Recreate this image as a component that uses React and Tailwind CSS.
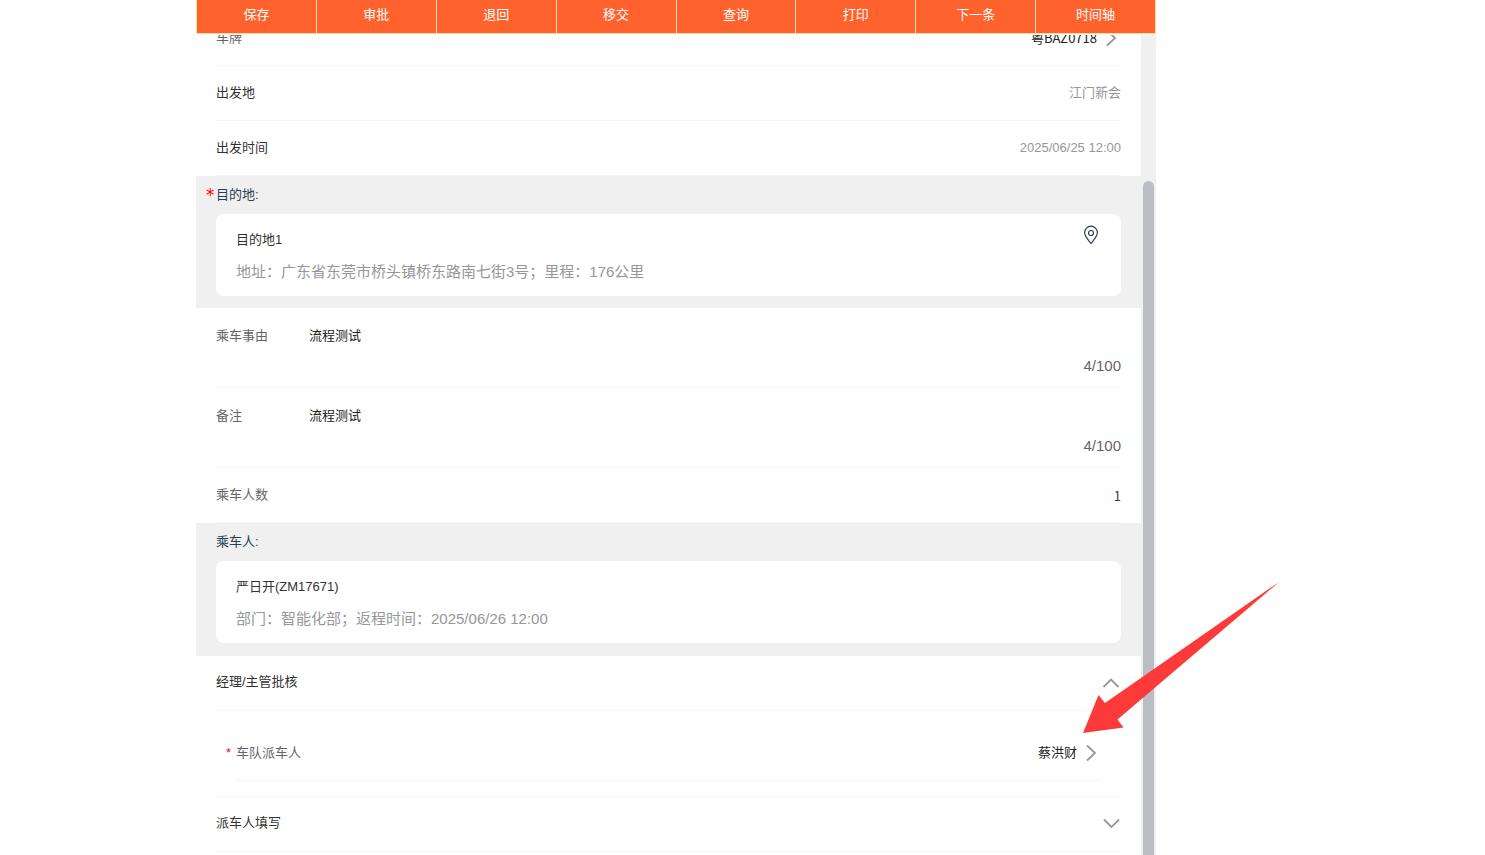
import React, { useState } from "react";

const actions = ["保存", "审批", "退回", "移交", "查询", "打印", "下一条", "时间轴"];

const chevronPaths = {
  right: "M6 2.5L14 10L6 17.500",
  up: "M2.500 15L10 7.500L17.500 15",
  down: "M3 6.500L10.500 14L18 6.500",
};

const Chevron = ({ direction }) => (
  <svg viewBox="0 0 20 20" className="h-5 w-5 shrink-0" fill="none" stroke="#969799" strokeWidth="1.8" aria-hidden="true">
    <path d={chevronPaths[direction]} />
  </svg>
);

const PinIcon = () => (
  <svg viewBox="0 0 20 20" className="h-5 w-5" fill="none" stroke="#2c3e50" strokeWidth="1.2" aria-hidden="true">
    <path d="M10 18.5C8 15.8 3.6 11.6 3.6 7.6A6.4 6.4 0 0 1 16.4 7.6C16.4 11.6 12 15.8 10 18.5Z" />
    <circle cx="10" cy="8" r="2.5" />
  </svg>
);

const Row = ({ children }) => (
  <div className="mx-5 flex h-[55px] items-center justify-between border-b border-[#f5f6f7]">{children}</div>
);

const TextRow = ({ id, label, value, onChange }) => (
  <div className="mx-5 border-b border-[#f5f6f7] pb-[9px]">
    <div className="flex items-start pt-[18px]">
      <label htmlFor={id} className="w-[93px] shrink-0 text-[#646566]">{label}</label>
      <textarea
        id={id}
        rows={1}
        maxLength={100}
        value={value}
        onChange={(e) => onChange(e.target.value)}
        className="block h-7 flex-1 resize-none text-[#222] outline-none"
      />
    </div>
    <p className="text-right text-[15px] leading-6 text-[#646566]">{value.length}/100</p>
  </div>
);

const CardSection = ({ title, required, heading, detail, action }) => (
  <section className="bg-[#f0f0f0] px-5 pb-3">
    <h2 className="-ml-[10px] flex h-[38px] items-center text-[#2c3e50]">
      <span className="w-[10px] font-['DejaVu_Sans',sans-serif] text-[17px] text-[#f00]">{required && "*"}</span>
      {title}
    </h2>
    <div className="flex h-[82px] items-start justify-between rounded-lg bg-white px-5 pt-[11px]">
      <div>
        <h3 className="leading-[30px] text-[#323233]">{heading}</h3>
        <p className="text-[15px] leading-[34px] text-[#969799]">{detail}</p>
      </div>
      {action}
    </div>
  </section>
);

const CollapseHeader = ({ title, open, onClick }) => (
  <button
    type="button"
    aria-expanded={open}
    onClick={onClick}
    className="flex h-[54px] w-full cursor-pointer items-center justify-between pb-0.5 text-[#323233]"
  >
    {title}
    <Chevron direction={open ? "up" : "down"} />
  </button>
);

const App = () => {
  const [reason, setReason] = useState("流程测试");
  const [remark, setRemark] = useState("流程测试");
  const [count, setCount] = useState("1");
  const [approvalOpen, setApprovalOpen] = useState(true);
  const [dispatchOpen, setDispatchOpen] = useState(false);

  return (
    <div className="h-screen overflow-hidden bg-white pl-[196px] pr-[329px] font-['Liberation_Sans','Noto_Sans_CJK_SC',sans-serif] text-[13px] leading-5">
      <div className="relative h-full">
        <nav className="absolute inset-x-0 top-0 z-10 bg-white pb-px">
          <div className="grid grid-cols-8 border-l border-[#ffd9a8]">
            {actions.map((name) => (
              <button
                key={name}
                type="button"
                className="h-[34px] cursor-pointer rounded-br-xs border-r border-b border-[#ffd9a8] bg-[#ff622d] pb-1 text-white"
              >
                {name}
              </button>
            ))}
          </div>
        </nav>

        <div className="flex h-full">
          <main className="min-w-0 flex-1 overflow-hidden pt-[11px]">
            <Row>
              <span className="text-[#646566]">车牌</span>
              <button type="button" className="flex cursor-pointer items-center gap-1 font-['Noto_Sans_CJK_SC',sans-serif] text-[#222]">
                粤BAZ0718
                <Chevron direction="right" />
              </button>
            </Row>
            <Row>
              <span className="text-[#323233]">出发地</span>
              <span className="text-[#969799]">江门新会</span>
            </Row>
            <Row>
              <span className="text-[#323233]">出发时间</span>
              <span className="text-[#969799]">2025/06/25 12:00</span>
            </Row>

            <CardSection
              title="目的地:"
              required
              heading="目的地1"
              detail="地址：广东省东莞市桥头镇桥东路南七街3号；里程：176公里"
              action={
                <button type="button" aria-label="查看地图" className="cursor-pointer">
                  <PinIcon />
                </button>
              }
            />

            <TextRow id="reason" label="乘车事由" value={reason} onChange={setReason} />
            <TextRow id="remark" label="备注" value={remark} onChange={setRemark} />
            <Row>
              <label htmlFor="count" className="text-[#646566]">乘车人数</label>
              <input
                id="count"
                type="text"
                inputMode="numeric"
                value={count}
                onChange={(e) => setCount(e.target.value)}
                className="w-20 pt-0.5 text-right font-['Noto_Sans_CJK_SC',sans-serif] text-[#2c3e50] outline-none"
              />
            </Row>

            <CardSection title="乘车人:" heading="严日开(ZM17671)" detail="部门：智能化部；返程时间：2025/06/26 12:00" />

            <div className="border-t border-[#f0f0f0] px-5">
              <section className="border-b border-[#f5f6f7]">
                <CollapseHeader title="经理/主管批核" open={approvalOpen} onClick={() => setApprovalOpen(!approvalOpen)} />
                {approvalOpen && (
                  <div className="border-t border-[#f5f6f7] py-[15px]">
                    <Row>
                      <span className="-ml-[10px] flex text-[#646566]">
                        <span className="w-[10px] text-[#ee0a24]">*</span>
                        车队派车人
                      </span>
                      <button type="button" className="flex cursor-pointer items-center gap-1 text-[#222]">
                        蔡洪财
                        <Chevron direction="right" />
                      </button>
                    </Row>
                  </div>
                )}
              </section>
              <section className="border-b border-[#f5f6f7]">
                <CollapseHeader title="派车人填写" open={dispatchOpen} onClick={() => setDispatchOpen(!dispatchOpen)} />
              </section>
            </div>
          </main>

          <div className="flex w-[15px] shrink-0 flex-col bg-[#f0f0f0] px-[2px] pt-[181px]" aria-hidden="true">
            <div className="flex-1 rounded-t-full bg-[#babdc3]" />
          </div>
        </div>

        {/* pointer drawn over the dispatcher field */}
        <svg
          viewBox="0 0 196 152"
          className="pointer-events-none absolute top-[582px] -right-[123px] z-20 h-[152px] w-[196px]"
          fill="#fc3a3a"
          aria-hidden="true"
        >
          <path d="M196 0L22 121L15.500 113L0 151L40.500 145.500L34.500 137.500Z" />
        </svg>
      </div>
    </div>
  );
};

export default App;
